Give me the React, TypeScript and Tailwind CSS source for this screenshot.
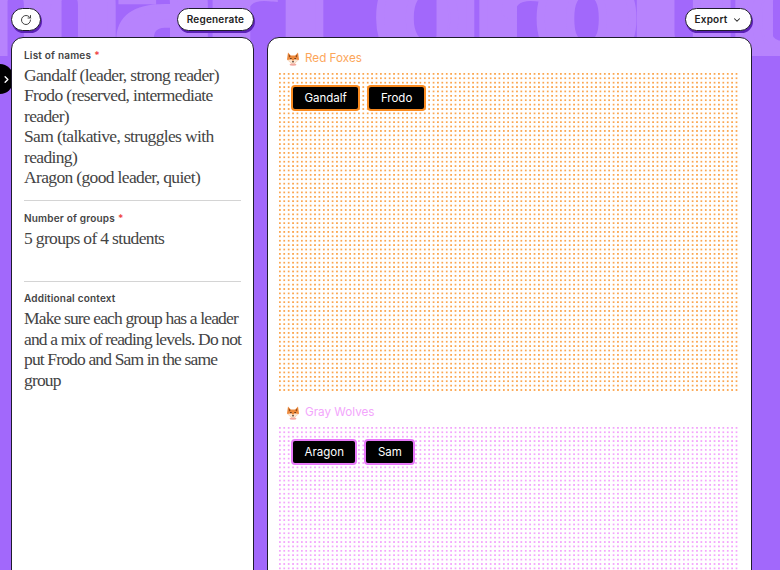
import React from 'react';
import { RotateCw, ChevronDown, ChevronRight } from 'lucide-react';

const Fox = () => (
  <svg width="14" height="14" viewBox="0 0 14 14" className="shrink-0">
    <path d="M2 0.5 L4.8 3.5 H9.2 L12 0.5 L13 7.5 L7 13 L1 7.5 Z" fill="#ee8a3c" />
    <path d="M1.4 8 L5.3 7.3 L7 9 L8.7 7.3 L12.6 8 L7 13 Z" fill="#fbe6d3" />
    <path d="M2.6 2.2 L4.6 4.2 L3.2 5.4 Z" fill="#8a4518" />
    <path d="M11.4 2.2 L9.4 4.2 L10.8 5.4 Z" fill="#8a4518" />
    <circle cx="4.9" cy="6.6" r="0.7" fill="#2b1408" />
    <circle cx="9.1" cy="6.6" r="0.7" fill="#2b1408" />
    <circle cx="7" cy="9.8" r="0.8" fill="#2b1408" />
    <ellipse cx="7" cy="12.6" rx="3.4" ry="1.2" fill="#f2a9a0" />
  </svg>
);

const Field = ({ label, required, children, className }: { label: string; required?: boolean; children: React.ReactNode; className?: string }) => (
  <div className={className}>
    <div className="text-[10px] leading-[14px] font-semibold text-[#444] tracking-[0.2px]">
      {label}
      {required && <span className="text-[#ef4444] ml-[3px]">*</span>}
    </div>
    <div className="font-['Liberation_Serif',serif] text-[17.5px] leading-[20.4px] text-[#444] tracking-[-0.65px] mt-[3px]">
      {children}
    </div>
  </div>
);

const Chip = ({ name, border }: { name: string; border: string }) => (
  <div className={`bg-black text-white text-[11.5px] font-normal rounded-[4px] h-[26px] pt-[1px] flex items-center border-2 px-[11.5px] ${border}`}>
    {name}
  </div>
);

const Group = ({ title, titleColor, pattern, names, border }: { title: string; titleColor: string; pattern: string; names: string[]; border: string }) => (
  <section>
    <div className={`flex items-center gap-[5px] h-[15px] pl-[7px] text-[11.7px] ${titleColor}`}>
      <Fox />
      {title}
    </div>
    <div className={`mt-[7px] h-[318px] p-[12px] flex items-start gap-[7px] bg-[length:4.4px_4.4px] ${pattern}`}>
      {names.map((n) => (
        <Chip key={n} name={n} border={border} />
      ))}
    </div>
  </section>
);

const btn = "bg-white border border-[#1f1b2e] rounded-full h-[23px] shadow-[1px_2px_0_#5b21b6] flex items-center justify-center text-[#222] text-[10px] font-semibold tracking-[0.2px]";

export default function App() {
  return (
    <div className="relative w-[780px] h-[570px] overflow-hidden bg-[#a268fb] font-['Inter',sans-serif]">
      {/* big wordmark behind everything */}
      <div className="absolute inset-x-0 top-0 h-[56px] overflow-hidden select-none">
        <div className="-ml-[123px] -mt-[85px] whitespace-nowrap text-[#b783fd] text-[180px] leading-none font-black tracking-[-4px] font-['Roboto',sans-serif] [-webkit-text-stroke:8px_#b783fd]">
          smart groups
        </div>
      </div>

      {/* sidebar handle */}
      <div className="absolute left-0 top-[64px] w-[13px] h-[30px] bg-black rounded-r-full flex items-center justify-center text-white pr-[1px]">
        <ChevronRight size={11} strokeWidth={3} />
      </div>

      <div className="relative grid grid-cols-[243px_485px] gap-x-[13px] pl-[11px] pt-[8px]">
        <div className="flex justify-between">
          <button className={`${btn} w-[30px]`}>
            <RotateCw size={12} strokeWidth={2} className="text-[#444]" />
          </button>
          <button className={`${btn} w-[77px]`}>Regenerate</button>
        </div>
        <div className="flex justify-end">
          <button className={`${btn} w-[67px] gap-[5px]`}>
            Export
            <ChevronDown size={10} strokeWidth={2.5} />
          </button>
        </div>

        <aside className="mt-[6px] bg-white border border-[#1f1b2e] rounded-t-[12px] h-[540px] px-[12px] pt-[10px]">
          <Field label="List of names" required className="pb-[13px] border-b border-[#d4d4d4]">
            Gandalf (leader, strong reader)
            <br />
            Frodo (reserved, intermediate reader)
            <br />
            Sam (talkative, struggles with reading)
            <br />
            Aragon (good leader, quiet)
          </Field>
          <Field label="Number of groups" required className="pt-[10px] h-[81px] border-b border-[#d4d4d4]">
            5 groups of 4 students
          </Field>
          <Field label="Additional context" className="pt-[9px]">
            <span className="block tracking-[-0.85px] -mr-[6px]">
              Make sure each group has a leader and a mix of reading levels. Do not put Frodo and Sam in the same group
            </span>
          </Field>
        </aside>

        <main className="mt-[6px] bg-white border border-[#1f1b2e] rounded-t-[12px] h-[540px] px-[11px] pt-[13px] flex flex-col gap-[14px]">
          <Group
            title="Red Foxes"
            titleColor="text-[#fca65a]"
            pattern="bg-[#fba650] bg-[linear-gradient(90deg,transparent_1.9px,#fff_1.9px),linear-gradient(transparent_1.9px,#fff_1.9px)]"
            names={['Gandalf', 'Frodo']}
            border="border-[#f98a1f]"
          />
          <Group
            title="Gray Wolves"
            titleColor="text-[#f3a6fc]"
            pattern="bg-[#f3a6fc] bg-[linear-gradient(90deg,transparent_1.9px,#fff_1.9px),linear-gradient(transparent_1.9px,#fff_1.9px)]"
            names={['Aragon', 'Sam']}
            border="border-[#e879f9]"
          />
        </main>
      </div>
    </div>
  );
}
